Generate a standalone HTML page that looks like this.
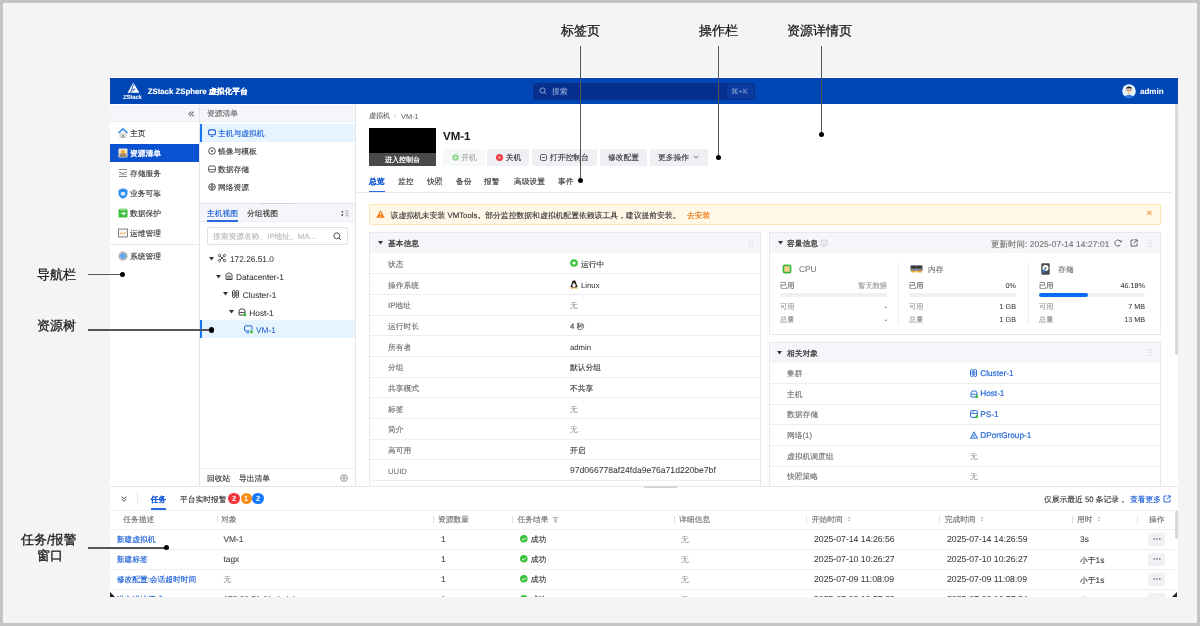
<!DOCTYPE html>
<html><head><meta charset="utf-8">
<style>
*{margin:0;padding:0;box-sizing:border-box}
html,body{width:1200px;height:626px;overflow:hidden}
body{background:#c4c4c4;font-family:"Liberation Sans",sans-serif;position:relative;color:#333;text-rendering:geometricPrecision}
.a{position:absolute;white-space:nowrap}
.t{position:absolute;white-space:nowrap;line-height:12px;margin-top:-5px;font-size:7.75px;-webkit-text-stroke-width:0.12px}
.L{margin-top:-5.3px;-webkit-text-stroke-width:0.05px}
#bg{position:absolute;left:3px;top:3px;width:1194px;height:620px;background:#f4f4f4}
#app{position:absolute;left:110px;top:77px;width:1068px;height:520px;background:#fff;overflow:hidden}
.ann{position:absolute;font-size:13px;color:#1a1a1a;line-height:16px;white-space:nowrap;-webkit-text-stroke-width:0.3px}
.vl{position:absolute;width:1.5px;background:#555}
.hl{position:absolute;height:1.5px;background:#555}
.dot{position:absolute;width:5.4px;height:5.4px;border-radius:50%;background:#000}
.nav{color:#333}
.gray{color:#666}
.lg{color:#999}
.blue{color:#1a5fd6;-webkit-text-stroke-width:0.15px}
svg{position:absolute;overflow:visible}
</style></head><body>
<div id="bg"></div><div id="wrap" style="position:absolute;left:0;top:0;width:1200px;height:626px;will-change:transform">
<div class="a" style="left:110px;top:77px;width:1068px;height:520px;background:#fff"></div>
<style>
.val{color:#3a3a3a}
.val2{color:#555}
.lab{color:#707070}
.hd{color:#333;-webkit-text-stroke-width:0.22px}
.bdg{width:11.2px;height:11.2px;border-radius:50%;color:#fff;font-size:7.5px;line-height:11.2px;text-align:center;font-weight:bold}
.cd{top:516px;width:1px;height:7px;background:#dcdfe4}
</style>
<!-- HEADER -->
<div class="a" style="left:110px;top:78px;width:1068px;height:26px;background:#0047b5"></div>
<svg style="left:126px;top:82px" width="15" height="12" viewBox="0 0 15 12"><path d="M7.2 0.5 L13.4 10.8 H1.6 Z" fill="#fff"/><path d="M7.6 1.6 L4.6 10.9" stroke="#0047b5" stroke-width="0.9"/><path d="M6.3 7.2 H9.2 L6.2 9.4" stroke="#0047b5" stroke-width="0.7" fill="none"/></svg>
<div class="a" style="left:123px;top:94.5px;font-size:6px;line-height:6px;color:#fff;font-weight:bold;letter-spacing:-0.15px">ZStack</div>
<div class="t" style="left:147.7px;top:91px;font-size:7.8px;color:#fff;font-weight:bold">ZStack ZSphere 虚拟化平台</div>
<div class="a" style="left:533px;top:83px;width:222px;height:17px;background:#062f8e;border-radius:2px"></div>
<svg style="left:539px;top:87px" width="8" height="8" viewBox="0 0 8 8"><circle cx="3.5" cy="3.5" r="2.6" stroke="#8fa3d6" stroke-width="1" fill="none"/><path d="M5.4 5.4 L7.2 7.2" stroke="#8fa3d6" stroke-width="1"/></svg>
<div class="t" style="left:552px;top:90.6px;color:#8fa3d6;font-size:7.8px">搜索</div>
<div class="a" style="left:727px;top:84px;width:27px;height:15px;background:#0a3a9e;border-radius:2px"></div>
<div class="t L" style="left:731px;top:91.5px;color:#8fa3d6;font-size:7.5px">⌘+K</div>
<svg style="left:1122px;top:84px" width="14" height="14" viewBox="0 0 14 14"><circle cx="7" cy="7" r="6.8" fill="#e2f2ff"/><path d="M2.6 12.4 Q7 9.2 11.4 12.4 Q9.5 13.8 7 13.8 Q4.5 13.8 2.6 12.4Z" fill="#1f6fe0"/><rect x="6.2" y="8.8" width="1.6" height="2" fill="#f2c49b"/><ellipse cx="7" cy="6.3" rx="2.6" ry="2.9" fill="#f5cfa8"/><path d="M4.2 5.6 Q4 2.4 7 2.4 Q10 2.4 9.8 5.6 L9.2 4.6 Q7 4 4.8 4.6Z" fill="#1a1a1a"/><path d="M4.6 6.2 H9.4" stroke="#666" stroke-width="0.7"/></svg>
<div class="t L" style="left:1140px;top:91.5px;color:#fff;font-size:8px;font-weight:bold">admin</div>

<!-- NAV -->
<div class="a" style="left:110px;top:105px;width:89px;height:17px;background:#f5f6f9;border-bottom:1px solid #eceef2"></div>
<div class="t L" style="left:188px;top:113.5px;color:#777;font-size:11.5px;-webkit-text-stroke-width:0.2px">«</div>
<div class="a" style="left:199px;top:104px;width:1px;height:382px;background:#e3e5ea"></div>
<div class="a" style="left:110px;top:144px;width:89px;height:18px;background:#0a52d0"></div>
<div class="a" style="left:110px;top:244px;width:89px;height:1px;background:#e8e9ec"></div>
<div class="t nav" style="left:130px;top:133px">主页</div>
<div class="t" style="left:130px;top:153px;color:#fff;-webkit-text-stroke-width:0.35px">资源清单</div>
<div class="t nav" style="left:130px;top:173px">存储服务</div>
<div class="t nav" style="left:130px;top:193px">业务可靠</div>
<div class="t nav" style="left:130px;top:213px">数据保护</div>
<div class="t nav" style="left:130px;top:233px">运维管理</div>
<div class="t nav" style="left:130px;top:256px">系统管理</div>
<!-- nav icons -->
<svg style="left:118px;top:128px" width="10" height="10" viewBox="0 0 10 10"><path d="M0.5 5 L5 0.8 L9.5 5" stroke="#2f8cf0" stroke-width="1.6" fill="none"/><path d="M2 4.5 V9.5 H8 V4.5" fill="#e8e8e8" stroke="#aaa" stroke-width="0.6"/><rect x="4" y="6.5" width="2" height="3" fill="#999"/></svg>
<svg style="left:118px;top:148px" width="10" height="10" viewBox="0 0 10 10"><rect x="0.5" y="0.5" width="9" height="9" rx="1" fill="#f0e6d0"/><circle cx="5" cy="4" r="2" fill="#f5a623"/><rect x="1.5" y="5.5" width="7" height="3.5" fill="#9c8a70"/></svg>
<svg style="left:118px;top:168px" width="10" height="10" viewBox="0 0 10 10"><path d="M1 1.5 H9 M1 4 L5 5.5 L9 4 M1 8.5 H9" stroke="#888" stroke-width="1" fill="none"/><path d="M1 6.5 H9" stroke="#bbb" stroke-width="1"/></svg>
<svg style="left:118px;top:187.5px" width="10" height="11" viewBox="0 0 10 11"><path d="M5 0.3 L9.5 2 V5.5 Q9.5 9 5 10.7 Q0.5 9 0.5 5.5 V2 Z" fill="#2f8cf0"/><path d="M2.5 5 L5 3.8 L7.5 5 L5 6.5 Z" fill="#fff"/><path d="M2.5 5.5 V6.8 L5 8 L7.5 6.8 V5.5" fill="#cfe4ff"/></svg>
<svg style="left:118px;top:208px" width="10" height="10" viewBox="0 0 10 10"><rect x="0.5" y="1" width="9" height="8.5" rx="1" fill="#3fbf3f"/><rect x="2" y="0.3" width="6.5" height="2" fill="#9be09b"/><path d="M3 5.5 H7 M5.5 4 L7 5.5 L5.5 7" stroke="#fff" stroke-width="1.1" fill="none"/></svg>
<svg style="left:118px;top:228px" width="10" height="10" viewBox="0 0 10 10"><rect x="0.5" y="1" width="9" height="8" fill="#f4f4f4" stroke="#777" stroke-width="0.9"/><path d="M2 6 L4 4.5 L5.5 6 L8 4" stroke="#f5a623" stroke-width="0.9" fill="none"/></svg>
<svg style="left:118px;top:251px" width="10" height="10" viewBox="0 0 10 10"><circle cx="5" cy="5" r="4.3" fill="#bbb"/><circle cx="5" cy="5" r="2.8" fill="#5fa8f5"/><circle cx="5" cy="5" r="4.3" fill="none" stroke="#999" stroke-width="0.8" stroke-dasharray="1.2 0.8"/></svg>

<!-- TREE COLUMN -->
<div class="a" style="left:200px;top:105px;width:155px;height:17px;background:#f5f6f9;border-bottom:1px solid #eceef2"></div>
<div class="t gray" style="left:207px;top:113px">资源清单</div>
<div class="a" style="left:200px;top:124px;width:155px;height:18px;background:#e6f4ff"></div>
<div class="a" style="left:200px;top:124px;width:2px;height:18px;background:#1677ff"></div>
<div class="t" style="left:218px;top:133px;color:#1a5fd6">主机与虚拟机</div>
<div class="t nav" style="left:218px;top:151px">镜像与模板</div>
<div class="t nav" style="left:218px;top:169px">数据存储</div>
<div class="t nav" style="left:218px;top:187px">网络资源</div>
<svg style="left:207.5px;top:129px" width="8" height="8" viewBox="0 0 8 8"><rect x="0.6" y="0.9" width="6.8" height="4.8" rx="1" stroke="#1a5fd6" stroke-width="1.1" fill="none"/><path d="M2.6 7.3 H5.4" stroke="#1a5fd6" stroke-width="1.1"/></svg>
<svg style="left:207.5px;top:147.3px" width="8" height="8" viewBox="0 0 8 8"><circle cx="4" cy="4" r="3.3" stroke="#555" stroke-width="1" fill="none"/><circle cx="4" cy="4" r="1.1" fill="#555"/></svg>
<svg style="left:207.5px;top:165px" width="8" height="8" viewBox="0 0 8 8"><rect x="0.6" y="1" width="6.8" height="6" rx="1.5" stroke="#555" stroke-width="1" fill="none"/><path d="M0.6 4.6 H7.4" stroke="#555" stroke-width="0.9"/></svg>
<svg style="left:207.5px;top:183px" width="8" height="8" viewBox="0 0 8 8"><circle cx="4" cy="4" r="3.3" stroke="#555" stroke-width="1" fill="none"/><path d="M0.8 4 H7.2 M4 0.8 Q2 4 4 7.2 M4 0.8 Q6 4 4 7.2" stroke="#555" stroke-width="0.8" fill="none"/></svg>
<div class="a" style="left:200px;top:203px;width:155px;height:1px;background:#e3e5ea"></div>
<div class="a" style="left:260px;top:203px;width:34px;height:1.2px;background:#d0d3d9"></div>
<div class="a" style="left:200px;top:204px;width:155px;height:18px;background:#f5f6f9;border-bottom:1px solid #eceef2"></div>
<div class="t" style="left:207px;top:213px;color:#1a5fd6">主机视图</div>
<div class="a" style="left:207px;top:220px;width:31px;height:1.6px;background:#2a6ae0"></div>
<div class="t nav" style="left:247px;top:213px">分组视图</div>
<svg style="left:341px;top:209.5px" width="8" height="7" viewBox="0 0 8 7"><circle cx="1.3" cy="1.8" r="0.9" fill="#444"/><circle cx="1.3" cy="5" r="0.9" fill="#444"/><path d="M4.3 1 H7.5 M4.3 3.4 H7.5 M4.3 5.8 H7.5" stroke="#888" stroke-width="0.8"/></svg>
<div class="a" style="left:207px;top:227px;width:141px;height:18px;border:1px solid #dcdfe5;border-radius:2px;background:#fff"></div>
<div class="t" style="left:213px;top:236px;color:#bbb">搜索资源名称、IP地址、MA...</div>
<svg style="left:333px;top:231.5px" width="9" height="9" viewBox="0 0 9 9"><circle cx="3.8" cy="3.8" r="3" stroke="#555" stroke-width="1" fill="none"/><path d="M6 6 L8 8" stroke="#555" stroke-width="1"/></svg>
<!-- tree rows -->
<div class="a" style="left:200px;top:320px;width:155px;height:18px;background:#e6f4ff"></div>
<div class="a" style="left:200px;top:320px;width:2px;height:18px;background:#1677ff"></div>
<svg style="left:209px;top:256.5px" width="5" height="4" viewBox="0 0 5 4"><path d="M0 0 H5 L2.5 3.5Z" fill="#333"/></svg>
<svg style="left:216px;top:274.5px" width="5" height="4" viewBox="0 0 5 4"><path d="M0 0 H5 L2.5 3.5Z" fill="#333"/></svg>
<svg style="left:222.5px;top:292px" width="5" height="4" viewBox="0 0 5 4"><path d="M0 0 H5 L2.5 3.5Z" fill="#333"/></svg>
<svg style="left:229px;top:310px" width="5" height="4" viewBox="0 0 5 4"><path d="M0 0 H5 L2.5 3.5Z" fill="#333"/></svg>
<svg style="left:218px;top:254px" width="8" height="8" viewBox="0 0 8 8"><circle cx="1.5" cy="1.5" r="1.1" fill="none" stroke="#444" stroke-width="1"/><circle cx="6.5" cy="1.5" r="1.1" fill="none" stroke="#444" stroke-width="1"/><circle cx="1.5" cy="6.5" r="1.1" fill="none" stroke="#444" stroke-width="1"/><circle cx="6.5" cy="6.5" r="1.1" fill="none" stroke="#444" stroke-width="1"/><path d="M2.3 2.3 L5.7 5.7 M5.7 2.3 L2.3 5.7" stroke="#444" stroke-width="1"/></svg>
<div class="t nav L" style="left:230px;top:258.5px;font-size:8.3px">172.26.51.0</div>
<svg style="left:225px;top:272px" width="8" height="8" viewBox="0 0 8 8"><path d="M1 7.5 V2.5 L4 0.7 L7 2.5 V7.5 Z" fill="none" stroke="#444" stroke-width="1"/><rect x="3" y="4" width="2" height="3.5" fill="none" stroke="#444" stroke-width="0.9"/></svg>
<div class="t nav L" style="left:236px;top:276.5px;font-size:8.3px">Datacenter-1</div>
<svg style="left:232px;top:290px" width="7" height="8" viewBox="0 0 7 8"><rect x="0.5" y="0.5" width="2.5" height="7" rx="1" fill="none" stroke="#444" stroke-width="1"/><rect x="4" y="0.5" width="2.5" height="7" rx="1" fill="none" stroke="#444" stroke-width="1"/><path d="M0.5 3 H3 M0.5 5 H3 M4 3 H6.5 M4 5 H6.5" stroke="#444" stroke-width="0.8"/></svg>
<div class="t nav L" style="left:242.7px;top:294px;font-size:8.3px">Cluster-1</div>
<svg style="left:238px;top:307.5px" width="9" height="9" viewBox="0 0 9 9"><path d="M1 7 V3 Q1 0.8 4 0.8 Q7 0.8 7 3 V7 Z" fill="none" stroke="#444" stroke-width="1"/><path d="M1 4.5 H7" stroke="#444" stroke-width="0.9"/><circle cx="6.8" cy="6.8" r="1.6" fill="#3cc13b"/></svg>
<div class="t nav L" style="left:249.3px;top:312px;font-size:8.3px">Host-1</div>
<svg style="left:244px;top:325px" width="10" height="9" viewBox="0 0 10 9"><rect x="0.6" y="0.8" width="7.4" height="5.2" rx="1" stroke="#1a5fd6" stroke-width="1" fill="none"/><path d="M2.5 7.8 H5" stroke="#1a5fd6" stroke-width="1"/><circle cx="7.5" cy="6.8" r="1.9" fill="#3cc13b" stroke="#fff" stroke-width="0.6"/></svg>
<div class="t L" style="left:256px;top:329.7px;font-size:8.3px;color:#1a5fd6">VM-1</div>
<!-- tree footer -->
<div class="a" style="left:200px;top:468px;width:155px;height:1px;background:#eceef2"></div>
<div class="t nav" style="left:207px;top:478px">回收站</div>
<div class="t nav" style="left:239px;top:478px">导出清单</div>
<svg style="left:340px;top:474px" width="8" height="8" viewBox="0 0 8 8"><circle cx="4" cy="4" r="3.4" stroke="#777" stroke-width="0.8" fill="none"/><circle cx="4" cy="4" r="1.3" stroke="#777" stroke-width="0.8" fill="none"/></svg>
<div class="a" style="left:355px;top:104px;width:1px;height:382px;background:#e3e5ea"></div>
<!-- DETAIL TOP -->
<div class="t gray" style="left:369px;top:116px;font-size:7px">虚拟机</div><div class="t L" style="left:394px;top:116px;font-size:7px;color:#bbb">›</div><div class="t gray L" style="left:401px;top:116px;font-size:7.4px">VM-1</div>
<div class="a" style="left:369px;top:128px;width:67px;height:38px;background:#000"></div>
<div class="a" style="left:369px;top:153px;width:67px;height:13px;background:#4a4a4a"></div>
<div class="t" style="left:369px;top:159.5px;width:67px;text-align:center;color:#fff;font-size:7px;-webkit-text-stroke-width:0.25px">进入控制台</div>
<div class="t L" style="left:443px;top:136.5px;font-size:11.5px;font-weight:bold;color:#1a1a1a;line-height:14px;margin-top:-7px">VM-1</div>
<div class="a" style="left:443px;top:148.5px;width:41.5px;height:17.5px;background:#f7f8fa;border-radius:1px"></div>
<div class="a" style="left:487.3px;top:148.5px;width:41.7px;height:17.5px;background:#eff0f4;border-radius:1px"></div>
<div class="a" style="left:532px;top:148.5px;width:65px;height:17.5px;background:#eff0f4;border-radius:1px"></div>
<div class="a" style="left:600px;top:148.5px;width:47px;height:17.5px;background:#eff0f4;border-radius:1px"></div>
<div class="a" style="left:650px;top:148.5px;width:58.4px;height:17.5px;background:#eff0f4;border-radius:1px"></div>
<svg style="left:451.5px;top:153.9px" width="7" height="7" viewBox="0 0 7 7"><circle cx="3.5" cy="3.5" r="3.3" fill="#92d992"/><circle cx="3.5" cy="3.5" r="1.2" fill="#d9f3d9"/></svg>
<div class="t" style="left:461.3px;top:156.5px;color:#aaa">开机</div>
<svg style="left:495.8px;top:153.9px" width="7" height="7" viewBox="0 0 7 7"><circle cx="3.5" cy="3.5" r="3.5" fill="#ef3b43"/><circle cx="3.5" cy="3.5" r="1.2" fill="#f7a5a8"/></svg>
<div class="t nav" style="left:505.7px;top:156.5px">关机</div>
<svg style="left:539.5px;top:154px" width="7" height="7" viewBox="0 0 7 7"><rect x="0.5" y="0.5" width="6" height="6" rx="1.3" fill="none" stroke="#555" stroke-width="0.9"/><path d="M2 3.5 H5" stroke="#555" stroke-width="0.9"/></svg>
<div class="t nav" style="left:550px;top:156.5px">打开控制台</div>
<div class="t nav" style="left:608px;top:156.5px">修改配置</div>
<div class="t nav" style="left:658px;top:156.5px">更多操作</div>
<svg style="left:693px;top:154.8px" width="6" height="4" viewBox="0 0 6 4"><path d="M0.5 0.8 L3 3 L5.5 0.8" fill="none" stroke="#555" stroke-width="0.8"/></svg>
<!-- tabs -->
<div class="t" style="left:369px;top:181px;color:#1a5fd6;font-weight:bold">总览</div>
<div class="a" style="left:369px;top:191.2px;width:16px;height:1.6px;background:#2a6ae0"></div>
<div class="t nav" style="left:398px;top:181px">监控</div>
<div class="t nav" style="left:427px;top:181px">快照</div>
<div class="t nav" style="left:456px;top:181px">备份</div>
<div class="t nav" style="left:484px;top:181px">报警</div>
<div class="t nav" style="left:514px;top:181px">高级设置</div>
<div class="t nav" style="left:558px;top:181px">事件</div>
<div class="a" style="left:356px;top:192px;width:816px;height:1px;background:#e8eaee"></div>
<!-- alert -->
<div class="a" style="left:369px;top:204px;width:792px;height:20.5px;background:#fff8e6;border:1px solid #ffe6b0;border-radius:2px"></div>
<svg style="left:376px;top:210px" width="9" height="8" viewBox="0 0 9 8"><path d="M4.5 0.3 L8.8 7.7 H0.2 Z" fill="#fa7d14"/><path d="M4.5 2.8 V5" stroke="#fff" stroke-width="0.9"/><circle cx="4.5" cy="6.3" r="0.5" fill="#fff"/></svg>
<div class="t nav" style="left:390.6px;top:214.5px;font-size:7.82px">该虚拟机未安装 VMTools。部分监控数据和虚拟机配置依赖该工具，建议提前安装。</div>
<div class="t" style="left:687px;top:214.5px;color:#e8740f">去安装</div>
<div class="t L" style="left:1146.5px;top:213px;color:#f08a24;font-size:10px">×</div>
<!-- BASIC INFO CARD -->
<div class="a" style="left:369px;top:231.5px;width:392px;height:260px;border:1px solid #e6e8ec;background:#fff"></div>
<div class="a" style="left:370px;top:232.5px;width:390px;height:20.5px;background:#f5f6f9"></div>
<svg style="left:377.5px;top:241px" width="5" height="4" viewBox="0 0 5 4"><path d="M0 0 H5 L2.5 3.5Z" fill="#333"/></svg>
<div class="t hd" style="left:388px;top:243px">基本信息</div>
<svg style="left:748.5px;top:239.5px" width="4" height="7" viewBox="0 0 4 7"><g fill="#ccc"><circle cx="0.8" cy="0.8" r="0.6"/><circle cx="3.2" cy="0.8" r="0.6"/><circle cx="0.8" cy="3.5" r="0.6"/><circle cx="3.2" cy="3.5" r="0.6"/><circle cx="0.8" cy="6.2" r="0.6"/><circle cx="3.2" cy="6.2" r="0.6"/></g></svg>
<div class="t lab" style="left:388px;top:264.13px">状态</div>
<svg style="left:570px;top:259.33px" width="8" height="8" viewBox="0 0 8 8"><circle cx="4" cy="4" r="3.8" fill="#3cc13b"/><circle cx="4" cy="4" r="1.6" fill="#fff"/></svg><div class="t val" style="left:581px;top:264.13px">运行中</div>
<div class="a" style="left:370px;top:273.17px;width:390px;height:1px;background:#eceef1"></div>
<div class="t lab" style="left:388px;top:284.8px">操作系统</div>
<svg style="left:570px;top:280.0px" width="8" height="9" viewBox="0 0 8 9"><path d="M4 0.3 Q6 0.3 6.2 2.8 Q6.4 4.5 7.4 6.2 Q7.8 7.5 6 7.8 H2 Q0.2 7.5 0.6 6.2 Q1.6 4.5 1.8 2.8 Q2 0.3 4 0.3Z" fill="#222"/><path d="M4 3 Q5.5 3.5 5.6 5.5 Q5.5 7.2 4 7.4 Q2.5 7.2 2.4 5.5 Q2.5 3.5 4 3Z" fill="#fff"/><path d="M3.2 2.5 L4 3.2 L4.8 2.5Z" fill="#f5a623"/><ellipse cx="2" cy="8" rx="1.6" ry="0.8" fill="#f5a623"/><ellipse cx="6" cy="8" rx="1.6" ry="0.8" fill="#f5a623"/></svg><div class="t val L" style="left:581px;top:284.8px">Linux</div>
<div class="a" style="left:370px;top:293.84px;width:390px;height:1px;background:#eceef1"></div>
<div class="t lab" style="left:388px;top:305.48px">IP地址</div>
<div class="t lg" style="left:570px;top:305.48px">无</div>
<div class="a" style="left:370px;top:314.51px;width:390px;height:1px;background:#eceef1"></div>
<div class="t lab" style="left:388px;top:326.14px">运行时长</div>
<div class="t val" style="left:570px;top:326.14px">4 秒</div>
<div class="a" style="left:370px;top:335.18px;width:390px;height:1px;background:#eceef1"></div>
<div class="t lab" style="left:388px;top:346.81px">所有者</div>
<div class="t val L" style="left:570px;top:346.81px">admin</div>
<div class="a" style="left:370px;top:355.85px;width:390px;height:1px;background:#eceef1"></div>
<div class="t lab" style="left:388px;top:367.49px">分组</div>
<div class="t val" style="left:570px;top:367.49px">默认分组</div>
<div class="a" style="left:370px;top:376.52px;width:390px;height:1px;background:#eceef1"></div>
<div class="t lab" style="left:388px;top:388.15px">共享模式</div>
<div class="t val" style="left:570px;top:388.15px">不共享</div>
<div class="a" style="left:370px;top:397.19px;width:390px;height:1px;background:#eceef1"></div>
<div class="t lab" style="left:388px;top:408.82px">标签</div>
<div class="t lg" style="left:570px;top:408.82px">无</div>
<div class="a" style="left:370px;top:417.86px;width:390px;height:1px;background:#eceef1"></div>
<div class="t lab" style="left:388px;top:429.49px">简介</div>
<div class="t lg" style="left:570px;top:429.49px">无</div>
<div class="a" style="left:370px;top:438.53px;width:390px;height:1px;background:#eceef1"></div>
<div class="t lab" style="left:388px;top:450.17px">高可用</div>
<div class="t val" style="left:570px;top:450.17px">开启</div>
<div class="a" style="left:370px;top:459.2px;width:390px;height:1px;background:#eceef1"></div>
<div class="t lab L" style="left:388px;top:470.84px">UUID</div>
<div class="t val L" style="left:570px;top:469.64px"><span style="font-size:8.6px">97d066778af24fda9e76a71d220be7bf</span></div>
<div class="a" style="left:370px;top:479.87px;width:390px;height:1px;background:#eceef1"></div>
<!-- CAPACITY CARD -->
<div class="a" style="left:768.5px;top:231.5px;width:392.5px;height:103px;border:1px solid #e6e8ec;background:#fff"></div>
<div class="a" style="left:769.5px;top:232.5px;width:390.5px;height:20.5px;background:#f5f6f9"></div>
<svg style="left:777.5px;top:241px" width="5" height="4" viewBox="0 0 5 4"><path d="M0 0 H5 L2.5 3.5Z" fill="#333"/></svg>
<div class="t hd" style="left:787px;top:243px">容量信息</div>
<svg style="left:820px;top:239px" width="8" height="8" viewBox="0 0 8 8"><circle cx="4" cy="4" r="3.3" fill="none" stroke="#bbb" stroke-width="0.7"/><path d="M4 3.3 V6" stroke="#bbb" stroke-width="0.8"/><circle cx="4" cy="2.2" r="0.45" fill="#bbb"/></svg>
<div class="t lab" style="left:991px;top:243px;font-size:8.4px;letter-spacing:0.1px">更新时间: 2025-07-14 14:27:01</div>
<svg style="left:1114px;top:239px" width="8" height="8" viewBox="0 0 8 8"><path d="M6.8 3.2 A3 3 0 1 0 6.3 5.8" fill="none" stroke="#555" stroke-width="0.9"/><path d="M5.2 1.2 L7 3.3 L7.6 0.8" fill="none" stroke="#555" stroke-width="0.8"/></svg>
<svg style="left:1129.5px;top:239px" width="8" height="8" viewBox="0 0 8 8"><path d="M3.5 1 H1 V7 H7 V4.5" fill="none" stroke="#555" stroke-width="0.9"/><path d="M4.5 0.8 H7.2 V3.5 M7 1 L3.5 4.5" fill="none" stroke="#555" stroke-width="0.9"/></svg>
<svg style="left:1148px;top:239.5px" width="4" height="7" viewBox="0 0 4 7"><g fill="#ccc"><circle cx="0.8" cy="0.8" r="0.6"/><circle cx="3.2" cy="0.8" r="0.6"/><circle cx="0.8" cy="3.5" r="0.6"/><circle cx="3.2" cy="3.5" r="0.6"/><circle cx="0.8" cy="6.2" r="0.6"/><circle cx="3.2" cy="6.2" r="0.6"/></g></svg>
<!-- cpu -->
<svg style="left:782px;top:264px" width="10" height="10" viewBox="0 0 10 10"><rect x="0.6" y="0.6" width="8.8" height="8.8" rx="2" fill="#3cb83c"/><rect x="2.3" y="2.3" width="5.4" height="5.4" fill="#fcd9a0"/><path d="M4 2.5 V7.5 M6 2.5 V7.5" stroke="#f5b35a" stroke-width="0.6"/></svg>
<div class="t lab L" style="left:799px;top:268.3px;font-size:8.3px">CPU</div>
<div class="t val2" style="left:780px;top:285px;font-size:7.2px">已用</div>
<div class="t lg" style="left:887px;font-size:7.2px;top:285px;transform:translateX(-100%)">暂无数据</div>
<div class="a" style="left:780px;top:293px;width:107px;height:4px;background:#eef0f3;border-radius:2px"></div>
<div class="t lg" style="left:780px;top:305.5px;font-size:7.2px">可用</div>
<div class="t val L" style="left:887px;font-size:7.2px;top:306.5px;transform:translateX(-100%)">-</div>
<div class="t lg" style="left:780px;top:318.5px;font-size:7.2px">总量</div>
<div class="t val L" style="left:887px;font-size:7.2px;top:319.5px;transform:translateX(-100%)">-</div>
<div class="a" style="left:898px;top:262px;width:1px;height:62px;background:#eceef1"></div>
<!-- memory -->
<svg style="left:909.5px;top:265px" width="13" height="8" viewBox="0 0 13 8"><rect x="0.5" y="0.3" width="12" height="5.5" fill="#555"/><rect x="1.5" y="1.3" width="4.3" height="1.6" fill="#333"/><rect x="7" y="1.3" width="4.3" height="1.6" fill="#333"/><rect x="1" y="4" width="11" height="1.3" fill="#8a95a5"/><rect x="1" y="5.8" width="5" height="1.7" rx="0.8" fill="#f5a623"/><rect x="7" y="5.8" width="5" height="1.7" rx="0.8" fill="#f5a623"/></svg>
<div class="t lab" style="left:928px;top:269px">内存</div>
<div class="t val2" style="left:909px;top:285px;font-size:7.2px">已用</div>
<div class="t val L" style="left:1016px;font-size:7.2px;top:285px;transform:translateX(-100%)">0%</div>
<div class="a" style="left:909px;top:293px;width:107px;height:4px;background:#eef0f3;border-radius:2px"></div>
<div class="t lg" style="left:909px;top:305.5px;font-size:7.2px">可用</div>
<div class="t val L" style="left:1016px;font-size:7.2px;top:306.5px;transform:translateX(-100%)">1 GB</div>
<div class="t lg" style="left:909px;top:318.5px;font-size:7.2px">总量</div>
<div class="t val L" style="left:1016px;font-size:7.2px;top:319.5px;transform:translateX(-100%)">1 GB</div>
<div class="a" style="left:1028px;top:262px;width:1px;height:62px;background:#eceef1"></div>
<!-- storage -->
<svg style="left:1041px;top:262.5px" width="9" height="12" viewBox="0 0 9 12"><rect x="0.3" y="0.3" width="8.4" height="11.4" rx="1.2" fill="#4a4a4a"/><circle cx="4.5" cy="5" r="3" fill="#fff"/><circle cx="4.5" cy="5" r="0.9" fill="#666"/><path d="M4.3 5.8 L1.6 9.8" stroke="#2f8cf0" stroke-width="1.4"/></svg>
<div class="t lab" style="left:1058px;top:269px">存储</div>
<div class="t val2" style="left:1039px;top:285px;font-size:7.2px">已用</div>
<div class="t val L" style="left:1145px;font-size:7.2px;top:285px;transform:translateX(-100%)">46.18%</div>
<div class="a" style="left:1039px;top:293px;width:106px;height:4px;background:#eef0f3;border-radius:2px"></div>
<div class="a" style="left:1039px;top:293px;width:49px;height:4px;background:#0a6cf5;border-radius:2px"></div>
<div class="t lg" style="left:1039px;top:305.5px;font-size:7.2px">可用</div>
<div class="t val L" style="left:1145px;font-size:7.2px;top:306.5px;transform:translateX(-100%)">7 MB</div>
<div class="t lg" style="left:1039px;top:318.5px;font-size:7.2px">总量</div>
<div class="t val L" style="left:1145px;font-size:7.2px;top:319.5px;transform:translateX(-100%)">13 MB</div>

<!-- RELATED CARD -->
<div class="a" style="left:768.5px;top:341.5px;width:392.5px;height:160px;border:1px solid #e6e8ec;background:#fff"></div>
<div class="a" style="left:769.5px;top:342.5px;width:390.5px;height:20.2px;background:#f5f6f9"></div>
<svg style="left:776.5px;top:350.5px" width="5" height="4" viewBox="0 0 5 4"><path d="M0 0 H5 L2.5 3.5Z" fill="#333"/></svg>
<div class="t hd" style="left:787px;top:352.5px">相关对象</div>
<svg style="left:1148px;top:349px" width="4" height="7" viewBox="0 0 4 7"><g fill="#ccc"><circle cx="0.8" cy="0.8" r="0.6"/><circle cx="3.2" cy="0.8" r="0.6"/><circle cx="0.8" cy="3.5" r="0.6"/><circle cx="3.2" cy="3.5" r="0.6"/><circle cx="0.8" cy="6.2" r="0.6"/><circle cx="3.2" cy="6.2" r="0.6"/></g></svg>
<div class="t lab" style="left:787px;top:373.03px">集群</div>
<svg style="left:970px;top:369.03px" width="7" height="8" viewBox="0 0 7 8"><rect x="0.5" y="0.5" width="2.5" height="7" rx="1" fill="none" stroke="#1a5fd6" stroke-width="0.9"/><rect x="4" y="0.5" width="2.5" height="7" rx="1" fill="none" stroke="#1a5fd6" stroke-width="0.9"/><path d="M0.5 3 H3 M0.5 5 H3 M4 3 H6.5 M4 5 H6.5" stroke="#1a5fd6" stroke-width="0.6"/></svg><div class="t blue L" style="left:980.3px;top:373.03px;font-size:8.2px">Cluster-1</div>
<div class="a" style="left:769.5px;top:382.87px;width:390.5px;height:1px;background:#eceef1"></div>
<div class="t lab" style="left:787px;top:393.7px">主机</div>
<svg style="left:969.5px;top:389.7px" width="9" height="8" viewBox="0 0 9 8"><path d="M1 7 V3 Q1 0.8 4 0.8 Q7 0.8 7 3 V7 Z" fill="none" stroke="#1a5fd6" stroke-width="0.9"/><path d="M1 4.3 H7" stroke="#1a5fd6" stroke-width="0.8"/><circle cx="6.8" cy="6.5" r="1.5" fill="#3cc13b"/></svg><div class="t blue L" style="left:980.3px;top:393.7px;font-size:8.2px">Host-1</div>
<div class="a" style="left:769.5px;top:403.54px;width:390.5px;height:1px;background:#eceef1"></div>
<div class="t lab" style="left:787px;top:414.37px">数据存储</div>
<svg style="left:969.5px;top:410.37px" width="9" height="8" viewBox="0 0 9 8"><rect x="0.6" y="0.6" width="6.8" height="6.8" rx="1.2" fill="none" stroke="#1a5fd6" stroke-width="0.9"/><path d="M0.6 3.5 H7.4 M2.5 2 H4" stroke="#1a5fd6" stroke-width="0.8"/><circle cx="6.8" cy="6.5" r="1.5" fill="#3cc13b"/></svg><div class="t blue L" style="left:980.3px;top:414.37px;font-size:8.2px">PS-1</div>
<div class="a" style="left:769.5px;top:424.21px;width:390.5px;height:1px;background:#eceef1"></div>
<div class="t lab" style="left:787px;top:435.04px">网络(1)</div>
<svg style="left:969.5px;top:431.04px" width="8" height="8" viewBox="0 0 8 8"><path d="M4 0.8 L7.5 7.2 H0.5 Z" fill="none" stroke="#1a5fd6" stroke-width="0.9"/><circle cx="4" cy="4.8" r="1.1" fill="none" stroke="#1a5fd6" stroke-width="0.7"/></svg><div class="t blue L" style="left:980.3px;top:435.04px;font-size:8.2px">DPortGroup-1</div>
<div class="a" style="left:769.5px;top:444.88px;width:390.5px;height:1px;background:#eceef1"></div>
<div class="t lab" style="left:787px;top:455.71px">虚拟机调度组</div>
<div class="t lg" style="left:970px;top:455.71px">无</div>
<div class="a" style="left:769.5px;top:465.55px;width:390.5px;height:1px;background:#eceef1"></div>
<div class="t lab" style="left:787px;top:476.38px">快照策略</div>
<div class="t lg" style="left:970px;top:476.38px">无</div>
<div class="a" style="left:769.5px;top:486.22px;width:390.5px;height:1px;background:#eceef1"></div>
<!-- scrollbars / bottom edge of detail -->
<div class="a" style="left:1174.5px;top:104px;width:3px;height:251px;background:#d6d8dc;border-radius:2px"></div>
<div class="a" style="left:644px;top:486.2px;width:33px;height:1.6px;background:#d3d5da;z-index:5"></div>
<!-- BOTTOM PANEL -->
<div class="a" style="left:110px;top:486px;width:1068px;height:111px;background:#fff;border-top:1.5px solid #e4e6ea;overflow:hidden">
</div>
<svg style="left:121px;top:496px" width="6" height="6" viewBox="0 0 6 6"><path d="M0.6 0.6 L3 2.6 L5.4 0.6 M0.6 3.2 L3 5.2 L5.4 3.2" fill="none" stroke="#444" stroke-width="0.9"/></svg>
<div class="a" style="left:137px;top:492px;width:1px;height:12.5px;background:#e6e8ec"></div>
<div class="t" style="left:150.7px;top:499px;color:#1a5fd6;font-weight:bold">任务</div>
<div class="a" style="left:150.7px;top:508.3px;width:15.3px;height:1.6px;background:#2a6ae0"></div>
<div class="t nav" style="left:180px;top:499px">平台实时报警</div>
<div class="a bdg" style="left:228.4px;top:493.2px;background:#f0353c">2</div>
<div class="a bdg" style="left:240.6px;top:493.2px;background:#fa8c16">1</div>
<div class="a bdg" style="left:252.4px;top:493.2px;background:#1677ff">2</div>
<div class="t nav" style="left:1044px;top:498.5px">仅展示最近 50 条记录，</div>
<div class="t blue" style="left:1130px;top:498.5px">查看更多</div>
<svg style="left:1163px;top:494.5px" width="8" height="8" viewBox="0 0 8 8"><path d="M3.5 1 H1 V7 H7 V4.5" fill="none" stroke="#1a5fd6" stroke-width="0.9"/><path d="M4.5 0.8 H7.2 V3.5 M7 1 L3.5 4.5" fill="none" stroke="#1a5fd6" stroke-width="0.9"/></svg>
<div class="a" style="left:110px;top:509.5px;width:1064px;height:1px;background:#eceef1"></div>
<div class="a" style="left:110px;top:529.3px;width:1064px;height:1px;background:#eceef1"></div>
<div class="a" style="left:110px;top:549.3px;width:1064px;height:1px;background:#eceef1"></div>
<div class="a" style="left:110px;top:569.3px;width:1064px;height:1px;background:#eceef1"></div>
<div class="a" style="left:110px;top:589.3px;width:1064px;height:1px;background:#eceef1"></div>
<!-- header -->
<div class="t lab" style="left:123.3px;top:519.3px">任务描述</div>
<div class="a cd" style="left:216.5px"></div><div class="t lab" style="left:221.3px;top:519.3px">对象</div>
<div class="a cd" style="left:432.5px"></div><div class="t lab" style="left:438px;top:519.3px">资源数量</div>
<div class="a cd" style="left:512.3px"></div><div class="t lab" style="left:517.5px;top:519.3px">任务结果</div>
<svg style="left:552.5px;top:516.5px" width="5" height="6" viewBox="0 0 5 6"><path d="M0.3 0.5 H4.7 L3 2.8 V5.5 L2 5 V2.8 Z" fill="none" stroke="#888" stroke-width="0.7"/></svg>
<div class="a cd" style="left:673.7px"></div><div class="t lab" style="left:679px;top:519.3px">详细信息</div>
<div class="a cd" style="left:806px"></div><div class="t lab" style="left:811.8px;top:519.3px">开始时间</div>
<svg class="srt" style="left:847px;top:516.3px" width="4" height="6" viewBox="0 0 4 6"><path d="M0.6 2.3 L2 0.8 L3.4 2.3 Z M0.6 3.7 L2 5.2 L3.4 3.7 Z" fill="#aaa"/></svg>
<div class="a cd" style="left:939px"></div><div class="t lab" style="left:944.8px;top:519.3px">完成时间</div>
<svg class="srt" style="left:980px;top:516.3px" width="4" height="6" viewBox="0 0 4 6"><path d="M0.6 2.3 L2 0.8 L3.4 2.3 Z M0.6 3.7 L2 5.2 L3.4 3.7 Z" fill="#aaa"/></svg>
<div class="a cd" style="left:1072px"></div><div class="t lab" style="left:1077px;top:519.3px">用时</div>
<svg class="srt" style="left:1097px;top:516.3px" width="4" height="6" viewBox="0 0 4 6"><path d="M0.6 2.3 L2 0.8 L3.4 2.3 Z M0.6 3.7 L2 5.2 L3.4 3.7 Z" fill="#aaa"/></svg>
<div class="a cd" style="left:1137px"></div><div class="t lab" style="left:1149px;top:519.3px">操作</div>
<div class="a" style="left:110px;top:530px;width:1064px;height:67px;overflow:hidden">
<div class="t blue" style="left:6.7px;top:9.2px">新建虚拟机</div>
<div class="t val L" style="left:113.4px;top:8.3px;font-size:8.4px">VM-1</div>
<div class="t val L" style="left:331px;top:8.3px;font-size:8.4px">1</div>
<svg style="left:409.9px;top:5.4px" width="8" height="8" viewBox="0 0 8 8"><circle cx="3.8" cy="3.8" r="3.8" fill="#3cc13b"/><path d="M2 3.9 L3.3 5.1 L5.7 2.7" fill="none" stroke="#fff" stroke-width="1"/></svg>
<div class="t val" style="left:420.7px;top:9.2px">成功</div>
<div class="t lg" style="left:571px;top:9.2px">无</div>
<div class="t val L" style="left:704px;top:8.3px;font-size:8.7px">2025-07-14 14:26:56</div>
<div class="t val L" style="left:837px;top:8.3px;font-size:8.7px">2025-07-14 14:26:59</div>
<div class="t val L" style="left:970px;top:8.3px;font-size:8.4px">3s</div>
<div class="a" style="left:1037.5px;top:3.0px;width:17.5px;height:12.5px;background:#f0f1f4;border-radius:1.5px"></div>
<svg style="left:1042.5px;top:8.2px" width="8" height="2" viewBox="0 0 8 2"><circle cx="1.2" cy="1" r="0.8" fill="#555"/><circle cx="4" cy="1" r="0.8" fill="#555"/><circle cx="6.8" cy="1" r="0.8" fill="#555"/></svg>
<div class="t blue" style="left:6.7px;top:29.2px">新建标签</div>
<div class="t val L" style="left:113.4px;top:28.3px;font-size:8.4px">tagx</div>
<div class="t val L" style="left:331px;top:28.3px;font-size:8.4px">1</div>
<svg style="left:409.9px;top:25.4px" width="8" height="8" viewBox="0 0 8 8"><circle cx="3.8" cy="3.8" r="3.8" fill="#3cc13b"/><path d="M2 3.9 L3.3 5.1 L5.7 2.7" fill="none" stroke="#fff" stroke-width="1"/></svg>
<div class="t val" style="left:420.7px;top:29.2px">成功</div>
<div class="t lg" style="left:571px;top:29.2px">无</div>
<div class="t val L" style="left:704px;top:28.3px;font-size:8.7px">2025-07-10 10:26:27</div>
<div class="t val L" style="left:837px;top:28.3px;font-size:8.7px">2025-07-10 10:26:27</div>
<div class="t val" style="left:970px;top:29.2px">小于<span style="font-size:8.4px">1s</span></div>
<div class="a" style="left:1037.5px;top:23.0px;width:17.5px;height:12.5px;background:#f0f1f4;border-radius:1.5px"></div>
<svg style="left:1042.5px;top:28.2px" width="8" height="2" viewBox="0 0 8 2"><circle cx="1.2" cy="1" r="0.8" fill="#555"/><circle cx="4" cy="1" r="0.8" fill="#555"/><circle cx="6.8" cy="1" r="0.8" fill="#555"/></svg>
<div class="t blue" style="left:6.7px;top:49.2px">修改配置:会话超时时间</div>
<div class="t lg" style="left:113.4px;top:49.2px">无</div>
<div class="t val L" style="left:331px;top:48.3px;font-size:8.4px">1</div>
<svg style="left:409.9px;top:45.4px" width="8" height="8" viewBox="0 0 8 8"><circle cx="3.8" cy="3.8" r="3.8" fill="#3cc13b"/><path d="M2 3.9 L3.3 5.1 L5.7 2.7" fill="none" stroke="#fff" stroke-width="1"/></svg>
<div class="t val" style="left:420.7px;top:49.2px">成功</div>
<div class="t lg" style="left:571px;top:49.2px">无</div>
<div class="t val L" style="left:704px;top:48.3px;font-size:8.7px">2025-07-09 11:08:09</div>
<div class="t val L" style="left:837px;top:48.3px;font-size:8.7px">2025-07-09 11:08:09</div>
<div class="t val" style="left:970px;top:49.2px">小于<span style="font-size:8.4px">1s</span></div>
<div class="a" style="left:1037.5px;top:43.0px;width:17.5px;height:12.5px;background:#f0f1f4;border-radius:1.5px"></div>
<svg style="left:1042.5px;top:48.2px" width="8" height="2" viewBox="0 0 8 2"><circle cx="1.2" cy="1" r="0.8" fill="#555"/><circle cx="4" cy="1" r="0.8" fill="#555"/><circle cx="6.8" cy="1" r="0.8" fill="#555"/></svg>
<div class="t blue" style="left:6.7px;top:69.2px">进入维护模式</div>
<div class="t val L" style="left:113.4px;top:68.3px;font-size:8.4px">172.26.51.0(admin)</div>
<div class="t val L" style="left:331px;top:68.3px;font-size:8.4px">1</div>
<svg style="left:409.9px;top:65.4px" width="8" height="8" viewBox="0 0 8 8"><circle cx="3.8" cy="3.8" r="3.8" fill="#3cc13b"/><path d="M2 3.9 L3.3 5.1 L5.7 2.7" fill="none" stroke="#fff" stroke-width="1"/></svg>
<div class="t val" style="left:420.7px;top:69.2px">成功</div>
<div class="t lg" style="left:571px;top:69.2px">无</div>
<div class="t val L" style="left:704px;top:68.3px;font-size:8.7px">2025-07-09 10:57:33</div>
<div class="t val L" style="left:837px;top:68.3px;font-size:8.7px">2025-07-09 10:57:34</div>
<div class="t val" style="left:970px;top:69.2px">小于<span style="font-size:8.4px">1s</span></div>
<div class="a" style="left:1037.5px;top:63.0px;width:17.5px;height:12.5px;background:#f0f1f4;border-radius:1.5px"></div>
<svg style="left:1042.5px;top:68.2px" width="8" height="2" viewBox="0 0 8 2"><circle cx="1.2" cy="1" r="0.8" fill="#555"/><circle cx="4" cy="1" r="0.8" fill="#555"/><circle cx="6.8" cy="1" r="0.8" fill="#555"/></svg>
</div>
<div class="a" style="left:1174.8px;top:510px;width:3px;height:29px;background:#d6d8dc;border-radius:2px"></div>
<svg style="left:110px;top:591.5px" width="5" height="5" viewBox="0 0 5 5"><path d="M0 0 L5 5 H0Z" fill="#222"/></svg>
<svg style="left:1172px;top:591.5px" width="5" height="5" viewBox="0 0 5 5"><path d="M5 0 L5 5 H0Z" fill="#222"/></svg>
<!-- annotations -->
<div class="ann" style="left:561px;top:23px">标签页</div>
<div class="ann" style="left:699px;top:23px">操作栏</div>
<div class="ann" style="left:787px;top:23px">资源详情页</div>
<div class="vl" style="left:579.8px;top:46px;height:134px"></div>
<div class="vl" style="left:717.5px;top:46px;height:111px"></div>
<div class="vl" style="left:820.6px;top:46px;height:88px"></div>
<div class="dot" style="left:577.9px;top:177.7px"></div>
<div class="dot" style="left:715.5px;top:154.5px"></div>
<div class="dot" style="left:818.7px;top:131.7px"></div>
<div class="ann" style="left:37px;top:267px">导航栏</div>
<div class="ann" style="left:37px;top:318px">资源树</div>
<div class="ann" style="left:21px;top:532px">任务/报警</div>
<div class="ann" style="left:37px;top:548px">窗口</div>
<div class="hl" style="left:87.5px;top:273.8px;width:35px"></div>
<div class="hl" style="left:87.5px;top:329.3px;width:124px"></div>
<div class="hl" style="left:87.5px;top:547px;width:79px"></div>
<div class="dot" style="left:120.1px;top:271.8px"></div>
<div class="dot" style="left:208.6px;top:327.3px"></div>
<div class="dot" style="left:164px;top:545.1px"></div>
</div></body></html>
